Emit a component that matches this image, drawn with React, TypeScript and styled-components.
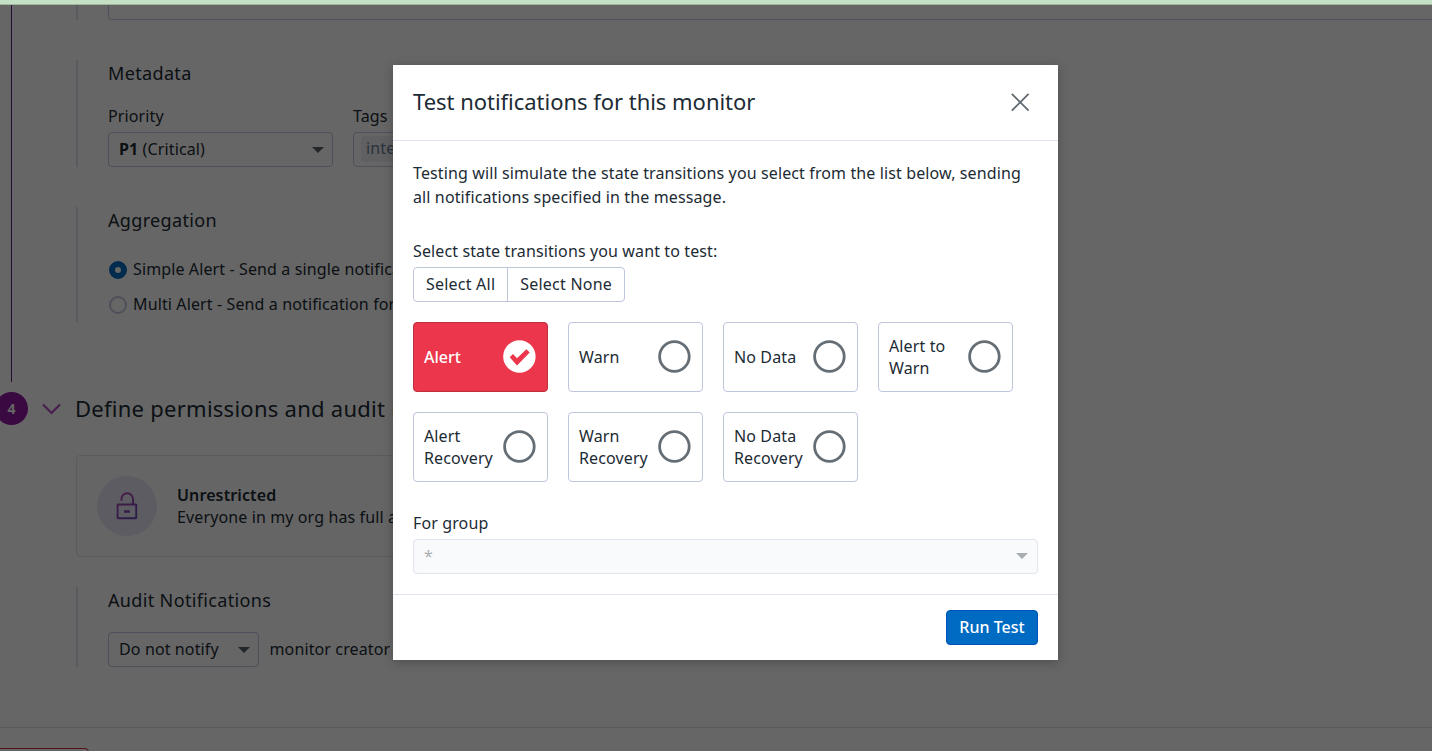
import React, { useState } from "react";
import styled, { createGlobalStyle, css } from "styled-components";

const Global = createGlobalStyle`
  *, *::before, *::after { box-sizing: border-box; }
  body {
    margin: 0;
    overflow: hidden;
    font-family: "Noto Sans", "Open Sans", sans-serif;
    font-size: 16px;
    line-height: 24px;
    letter-spacing: 0.12px;
    color: #1c2b34;
    background: #fff;
  }
  button { font: inherit; letter-spacing: inherit; color: inherit; margin: 0; cursor: pointer; }
`;

const Screen = styled.div`
  position: relative;
  width: 1432px;
  height: 751px;
  overflow: hidden;
`;

const Page = styled.main`
  height: 751px;
  display: flex;
  flex-direction: column;
  overflow: hidden;
  background: #fff;
  & > * { flex-shrink: 0; }
`;

const StepBody = styled.div<{ $rail?: boolean }>`
  margin-left: 11px;
  padding-left: ${(p) => (p.$rail ? 64 : 65)}px;
  border-left: ${(p) => (p.$rail ? "1px solid #6b1a80" : "0")};
`;

const FirstStep = styled(StepBody)`
  height: 382px;
`;

const Section = styled.section<{ $gap?: number; $height: number }>`
  height: ${(p) => p.$height}px;
  margin-top: ${(p) => p.$gap ?? 0}px;
  padding-left: 30px;
  border-left: 2px solid #e1e3f0;
`;

const SectionTitle = styled.h3`
  margin: 0;
  font-size: 18px;
  line-height: 26px;
  font-weight: 400;
  letter-spacing: 0.35px;
`;

const EditorBottom = styled.div`
  height: 20px;
  border: 1px solid #c0c5de;
  border-top: 0;
  border-right: 0;
  border-radius: 0 0 0 4px;
`;

const Fields = styled.div`
  display: flex;
  gap: 20px;
  margin-top: 18px;
`;

const Field = styled.div<{ $width: number }>`
  width: ${(p) => p.$width}px;
`;

const Label = styled.div`
  height: 28px;
  line-height: 24px;
`;

const SelectBox = styled.div<{ $width?: number; $disabled?: boolean }>`
  width: ${(p) => (p.$width ? `${p.$width}px` : "100%")};
  height: 35px;
  display: flex;
  align-items: center;
  justify-content: space-between;
  padding: 0 8px 1px 10px;
  border: 1px solid ${(p) => (p.$disabled ? "#e1e3ee" : "#c0c5de")};
  border-radius: 4px;
  background: ${(p) => (p.$disabled ? "#f9fafc" : "transparent")};
  color: ${(p) => (p.$disabled ? "#a9b0b5" : "inherit")};
`;

const TagBox = styled(SelectBox)`
  justify-content: flex-start;
  padding-left: 7px;
`;

const Tag = styled.span`
  height: 26px;
  padding: 0 5px;
  line-height: 24px;
  border-radius: 4px;
  background: #efeff4;
  color: #6d7f96;
`;

const Caret = styled.span`
  width: 0;
  height: 0;
  border: 6px solid transparent;
  border-top: 6px solid #585f66;
  border-bottom: 0;
  margin-top: 2px;
`;

const MutedCaret = styled(Caret)`
  border-top-color: #a9aeb2;
  margin-right: 1px;
  margin-top: 0;
`;

const Radios = styled.div`
  display: flex;
  flex-direction: column;
  gap: 11px;
  margin-top: 24px;
`;

const RadioRow = styled.label`
  display: flex;
  align-items: center;
  gap: 6px;
  height: 24px;
  padding-left: 1px;
  white-space: nowrap;
`;

const RadioDot = styled.span<{ $on?: boolean }>`
  width: 18px;
  height: 18px;
  margin-top: 2px;
  border-radius: 50%;
  border: ${(p) => (p.$on ? "6px solid #006bc2" : "2px solid #c0c5de")};
`;

const StepHeader = styled.header`
  display: flex;
  align-items: center;
  height: 33px;
  margin: 10px 0 0 -5px;
`;

const StepNumber = styled.span`
  width: 33px;
  height: 33px;
  border-radius: 50%;
  background: #9317a3;
  color: #fff;
  font-size: 14px;
  line-height: 33px;
  font-weight: 700;
  text-align: center;
`;

const Chevron = styled.svg`
  width: 19px;
  height: 12px;
  margin: 1px 14px 0 14px;
`;

const StepTitle = styled.h2`
  margin: 0;
  font-size: 22px;
  line-height: 33px;
  font-weight: 400;
  letter-spacing: 0.26px;
  white-space: nowrap;
`;

const Access = styled.div`
  width: 940px;
  height: 102px;
  margin-top: 30px;
  display: flex;
  align-items: center;
  gap: 20px;
  padding-left: 20px;
  border: 1px solid #e1e3e8;
  border-radius: 4px;
  background: #fcfcfd;
`;

const LockDisc = styled.div`
  width: 60px;
  height: 60px;
  display: grid;
  place-items: center;
  border-radius: 50%;
  background: #ece6f8;
`;

const AccessText = styled.div`
  line-height: 22px;
  white-space: nowrap;
`;

const AccessName = styled.div`
  font-weight: 600;
`;

const NotifyRow = styled.div`
  display: flex;
  align-items: center;
  gap: 10.5px;
  margin-top: 19px;
  white-space: nowrap;
`;

const NotifyTarget = styled.span`
  padding-bottom: 2px;
`;

const PageFooter = styled.footer`
  margin-top: 60px;
  padding-top: 20px;
  border-top: 1px solid #dcdee6;
`;

const DeleteButton = styled.button`
  display: block;
  width: 99px;
  height: 35px;
  margin-left: -10px;
  border: 1px solid #d33043;
  border-radius: 4px;
  background: #fff;
`;

const Backdrop = styled.div`
  position: absolute;
  inset: 0;
  display: flex;
  align-items: flex-start;
  justify-content: center;
  padding: 65px 0 0 19px;
  background: rgba(0, 0, 0, 0.6);
`;

const Banner = styled.div`
  position: absolute;
  inset: 0 0 auto 0;
  height: 5px;
  background: #c5e1c5;
  border-bottom: 1px solid #9fb59f;
`;

const Dialog = styled.div`
  width: 665px;
  height: 595px;
  display: flex;
  flex-direction: column;
  background: #fff;
  box-shadow: 0 2px 10px rgba(0, 0, 0, 0.25);
`;

const DialogHeader = styled.header`
  height: 76px;
  display: flex;
  align-items: center;
  justify-content: space-between;
  padding: 0 28px 2px 20px;
  border-bottom: 1px solid #e1e3f0;
`;

const DialogTitle = styled.h1`
  margin: 0;
  font-size: 22px;
  line-height: 33px;
  font-weight: 400;
  letter-spacing: -0.03px;
`;

const CloseButton = styled.button`
  width: 20px;
  height: 20px;
  padding: 0;
  border: 0;
  background: none;
  svg { display: block; }
`;

const DialogBody = styled.div`
  flex: 1;
  padding: 20px 20px 0;
`;

const Intro = styled.p`
  margin: 0 0 30px;
  padding-right: 10px;
`;

const ButtonGroup = styled.div`
  display: inline-flex;
  height: 35px;
  border: 1px solid #c0c5de;
  border-radius: 4px;
`;

const GroupButton = styled.button`
  padding: 0 12px 1px;
  border: 0;
  background: none;
  letter-spacing: 0.22px;
  & + & { border-left: 1px solid #c0c5de; }
`;

const Options = styled.div`
  display: grid;
  grid-template-columns: repeat(4, 135px);
  grid-auto-rows: 70px;
  gap: 20px;
  margin: 20px 0 29px;
`;

const Option = styled.button<{ $on: boolean }>`
  display: flex;
  align-items: center;
  justify-content: space-between;
  padding: 0 11px 0 10px;
  border: 1px solid #c0c5de;
  border-radius: 4px;
  background: #fff;
  line-height: 22px;
  text-align: left;
  ${(p) =>
    p.$on &&
    css`
      border-color: #bc303c;
      background: #eb364b;
      color: #fff;
      font-weight: 500;
      letter-spacing: 0;
    `}
`;

const OptionName = styled.span<{ $wrap: boolean }>`
  max-width: ${(p) => (p.$wrap ? 72 : 80)}px;
`;

const Ring = styled.svg`
  width: 34px;
  height: 34px;
  flex: none;
`;

const DialogFooter = styled.footer`
  height: 66px;
  display: flex;
  justify-content: flex-end;
  padding: 15px 20px;
  border-top: 1px solid #e1e3ee;
`;

const RunButton = styled.button`
  width: 92px;
  height: 35px;
  padding: 0 0 1px;
  border: 1px solid #0052b8;
  border-radius: 4px;
  background: #006bc2;
  color: #fff;
  font-weight: 500;
  letter-spacing: 0;
`;

const transitions = [
  "Alert",
  "Warn",
  "No Data",
  "Alert to Warn",
  "Alert Recovery",
  "Warn Recovery",
  "No Data Recovery",
];

const CheckRing = ({ on }: { on: boolean }) => (
  <Ring viewBox="0 0 34 34">
    {on ? (
      <>
        <circle cx="17.4" cy="16.5" r="16.2" fill="#fff" />
        <path d="M7.7 17.2L11 13.9l4 4.3 9.4-8.9 3.3 3.1L15 25.4z" fill="#eb364b" />
      </>
    ) : (
      <circle cx="17.4" cy="16.5" r="14.8" fill="none" stroke="#666e75" strokeWidth="2.8" />
    )}
  </Ring>
);

export default function App() {
  const [selected, setSelected] = useState<string[]>(["Alert"]);
  const toggle = (name: string) =>
    setSelected((s) => (s.includes(name) ? s.filter((n) => n !== name) : [...s, name]));

  return (
    <Screen>
      <Global />
      <Page>
        <FirstStep $rail>
          <Section $height={20}>
            <EditorBottom />
          </Section>
          <Section $height={107} $gap={40}>
            <SectionTitle>Metadata</SectionTitle>
            <Fields>
              <Field $width={225}>
                <Label>Priority</Label>
                <SelectBox>
                  <span><b>P1</b> (Critical)</span>
                  <Caret />
                </SelectBox>
              </Field>
              <Field $width={400}>
                <Label>Tags</Label>
                <TagBox>
                  <Tag>integration</Tag>
                </TagBox>
              </Field>
            </Fields>
          </Section>
          <Section $height={115} $gap={40}>
            <SectionTitle>Aggregation</SectionTitle>
            <Radios>
              <RadioRow>
                <RadioDot $on />
                Simple Alert - Send a single notification
              </RadioRow>
              <RadioRow>
                <RadioDot />
                Multi Alert - Send a notification for each group
              </RadioRow>
            </Radios>
          </Section>
        </FirstStep>

        <StepHeader>
          <StepNumber>4</StepNumber>
          <Chevron viewBox="0 0 19 12" fill="none" stroke="#b44fc4" strokeWidth="2.2">
            <path d="M1 1.5l8.5 8.5L18 1.5" />
          </Chevron>
          <StepTitle>Define permissions and audit notifications</StepTitle>
        </StepHeader>

        <StepBody>
          <Access>
            <LockDisc>
              <svg width="24" height="30" viewBox="0 0 24 30" fill="none">
                <defs>
                  <linearGradient id="lock" gradientUnits="userSpaceOnUse" x1="4" y1="3" x2="20" y2="28">
                    <stop offset="0" stopColor="#b845ae" />
                    <stop offset="1" stopColor="#6548b4" />
                  </linearGradient>
                </defs>
                <g stroke="url(#lock)" strokeWidth="1.9">
                  <rect x="2.6" y="13.5" width="18.6" height="13.8" rx="0.5" />
                  <path d="M6.4 9.7V8.1a5.8 5.8 0 0 1 11.6 0v5.4" />
                </g>
                <path d="M9 19.2h5.8v2.6H9z" fill="#8d48b4" />
              </svg>
            </LockDisc>
            <AccessText>
              <AccessName>Unrestricted</AccessName>
              Everyone in my org has full access
            </AccessText>
          </Access>
          <Section $height={80} $gap={30}>
            <SectionTitle>Audit Notifications</SectionTitle>
            <NotifyRow>
              <SelectBox $width={151}>
                Do not notify
                <Caret />
              </SelectBox>
              <NotifyTarget>monitor creator</NotifyTarget>
            </NotifyRow>
          </Section>
        </StepBody>
        <PageFooter>
          <DeleteButton aria-label="Delete" />
        </PageFooter>
      </Page>

      <Backdrop>
        <Dialog role="dialog">
          <DialogHeader>
            <DialogTitle>Test notifications for this monitor</DialogTitle>
            <CloseButton aria-label="Close">
              <svg width="20" height="20" viewBox="0 0 20 20" stroke="#626a72" strokeWidth="1.8">
                <path d="M1.8 1.8l16.8 16.8M18.6 1.8L1.8 18.6" />
              </svg>
            </CloseButton>
          </DialogHeader>
          <DialogBody>
            <Intro>
              Testing will simulate the state transitions you select from the list below, sending
              all notifications specified in the message.
            </Intro>
            <Label>Select state transitions you want to test:</Label>
            <ButtonGroup>
              <GroupButton onClick={() => setSelected(transitions)}>Select All</GroupButton>
              <GroupButton onClick={() => setSelected([])}>Select None</GroupButton>
            </ButtonGroup>
            <Options>
              {transitions.map((name) => (
                <Option key={name} $on={selected.includes(name)} onClick={() => toggle(name)}>
                  <OptionName $wrap={name.length > 8}>{name}</OptionName>
                  <CheckRing on={selected.includes(name)} />
                </Option>
              ))}
            </Options>
            <Label>For group</Label>
            <SelectBox $disabled>
              *
              <MutedCaret />
            </SelectBox>
          </DialogBody>
          <DialogFooter>
            <RunButton>Run Test</RunButton>
          </DialogFooter>
        </Dialog>
      </Backdrop>
      <Banner />
    </Screen>
  );
}
